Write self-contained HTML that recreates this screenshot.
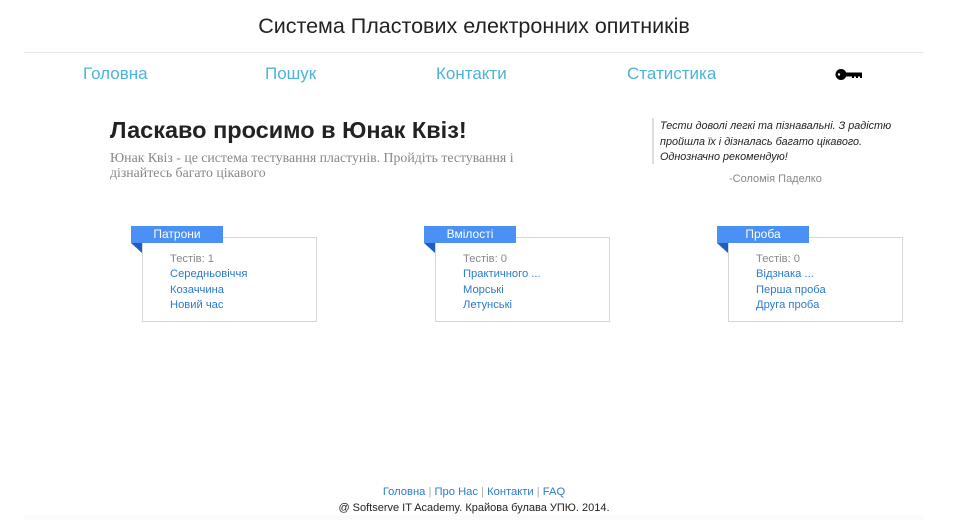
<!DOCTYPE html>
<html><head><meta charset="utf-8"><style>
body{margin:0;width:960px;height:520px;background:#fff;font-family:"Liberation Sans",sans-serif;position:relative;overflow:hidden}
.a{position:absolute;white-space:nowrap}
.nav{top:64px;font-size:17px;color:#4bb4da}
.ban{position:absolute;width:92px;height:17px;background:#4a90f5;color:#fff;font-size:12px;text-align:center;line-height:17px}
.tri{position:absolute;width:0;height:0;border-top:10px solid #1f5fc4;border-left:11px solid transparent}
.box{position:absolute;width:173px;height:83px;border:1px solid #d6d6d6;}
.box div{position:absolute;left:27px;font-size:11.2px;color:#2b7ad0}
</style></head><body>
<div class="a" style="left:0;width:948px;text-align:center;top:14px;font-size:21.5px;color:#222">Система Пластових електронних опитників</div>
<div class="a" style="left:24px;width:900px;top:52px;border-top:1px solid #e8e8e8"></div>
<div class="a nav" style="left:83px">Головна</div>
<div class="a nav" style="left:265px">Пошук</div>
<div class="a nav" style="left:436px">Контакти</div>
<div class="a nav" style="left:627px">Статистика</div>
<svg class="a" style="left:835px;top:68px" width="28" height="13" viewBox="0 0 28 13"><circle cx="6" cy="6.5" r="5.5" fill="#000"/><rect x="9" y="4.5" width="18" height="4" fill="#000"/><rect x="17" y="7" width="2" height="3" fill="#000"/><rect x="21" y="7" width="2" height="3" fill="#000"/><rect x="25" y="7" width="2" height="3" fill="#000"/><circle cx="4" cy="6.5" r="1.2" fill="#fff"/></svg>
<div class="a" style="left:110px;top:117px;font-size:23.5px;font-weight:bold;color:#222">Ласкаво просимо в Юнак Квіз!</div>
<div class="a" style="left:110px;top:150px;font-size:13.8px;line-height:15px;color:#888;font-family:'Liberation Serif',serif;white-space:normal;width:420px">Юнак Квіз - це система тестування пластунів. Пройдіть тестування і дізнайтесь багато цікавого</div>
<div class="a" style="left:652px;top:118px;height:46px;border-left:2px solid #ddd"></div>
<div class="a" style="left:660px;top:119px;font-size:10.8px;line-height:15.5px;font-style:italic;color:#222">Тести доволі легкі та пізнавальні. З радістю<br>пройшла їх і дізналась багато цікавого.<br>Однозначно рекомендую!</div>
<div class="a" style="left:729px;top:173px;font-size:11px;color:#888">-Соломія Паделко</div>

<div class="box" style="left:142px;top:237px"><div style="top:15px;color:#888">Тестів: 1</div><div style="top:30px">Середньовіччя</div><div style="top:46px">Козаччина</div><div style="top:61px">Новий час</div></div>
<div class="ban" style="left:131px;top:226px">Патрони</div><div class="tri" style="left:131px;top:243px"></div>

<div class="box" style="left:435px;top:237px"><div style="top:15px;color:#888">Тестів: 0</div><div style="top:30px">Практичного ...</div><div style="top:46px">Морські</div><div style="top:61px">Летунські</div></div>
<div class="ban" style="left:424px;top:226px">Вмілості</div><div class="tri" style="left:424px;top:243px"></div>

<div class="box" style="left:728px;top:237px"><div style="top:15px;color:#888">Тестів: 0</div><div style="top:30px">Відзнака ...</div><div style="top:46px">Перша проба</div><div style="top:61px">Друга проба</div></div>
<div class="ban" style="left:717px;top:226px">Проба</div><div class="tri" style="left:717px;top:243px"></div>

<div class="a" style="left:0;width:948px;text-align:center;top:486px;font-size:11.2px;color:#2b7ad0">Головна <span style="color:#aaa">|</span> Про Нас <span style="color:#aaa">|</span> Контакти <span style="color:#aaa">|</span> FAQ</div>
<div class="a" style="left:0;width:948px;text-align:center;top:502px;font-size:11px;color:#222">@ Softserve IT Academy. Крайова булава УПЮ. 2014.</div>
<div class="a" style="left:24px;width:900px;top:515px;height:5px;background:#fbfbfb;z-index:-1"></div>
</body></html>
